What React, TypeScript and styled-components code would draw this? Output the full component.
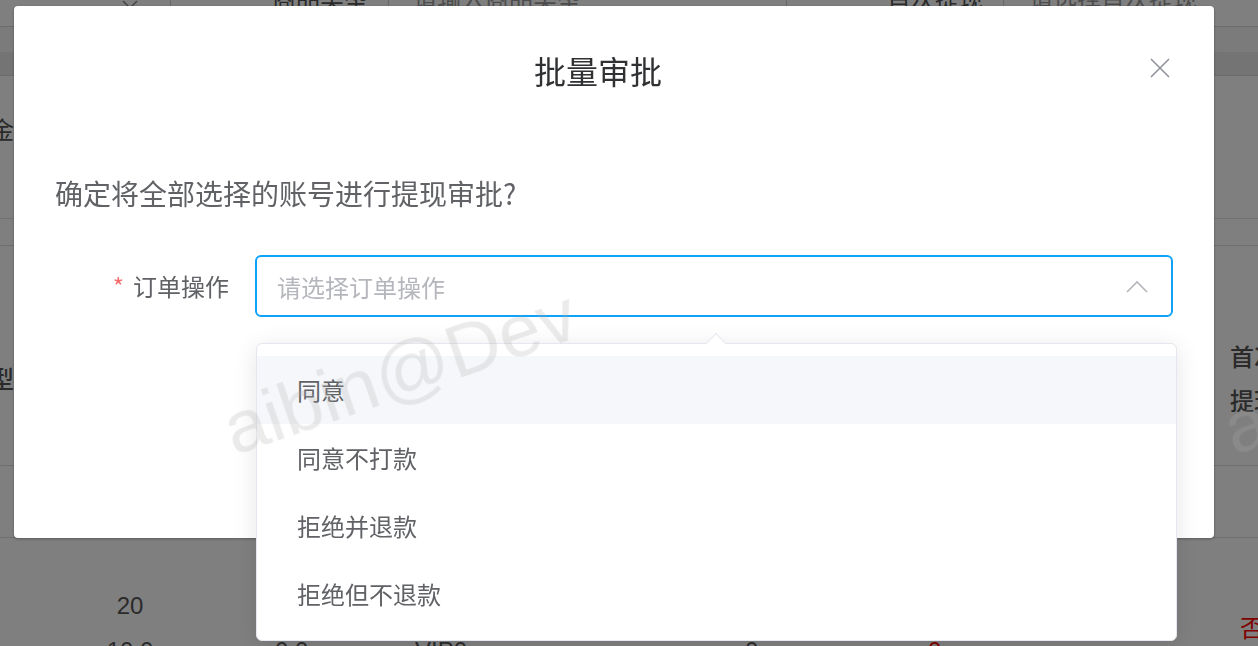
import React from "react";
import styled, { createGlobalStyle } from "styled-components";

const GlobalStyle = createGlobalStyle`
  html, body { margin: 0; padding: 0; height: 100%; overflow: hidden; }
  body {
    font-family: "Noto Sans CJK SC", "Noto Sans", "Liberation Sans", sans-serif;
    background: #ffffff;
  }
  * { box-sizing: border-box; }
`;

/* ---------- background page ---------- */
const Page = styled.div`
  height: 646px;
  overflow: hidden;
  background: #fff;
  color: #666;
  font-size: 24px;
`;

const FilterRow = styled.div`
  height: 27px;
  display: flex;
  align-items: flex-start;
  border-bottom: 1px solid #d8d8d8;
  overflow: hidden;
`;

const FilterSeg = styled.div<{ $w: number; $pl: number; $sep?: boolean; $muted?: boolean }>`
  width: ${(p) => p.$w}px;
  flex: none;
  height: 20px;
  display: flex;
  align-items: flex-end;
  padding-left: ${(p) => p.$pl}px;
  padding-bottom: 10px;
  border-right: ${(p) => (p.$sep ? "1px solid #cfcfcf" : "none")};
  color: ${(p) => (p.$muted ? "#9a9a9a" : "#555")};
  line-height: 24px;
  white-space: nowrap;
`;

const Band = styled.div<{ $h: number; $bg: string; $line?: boolean }>`
  height: ${(p) => p.$h}px;
  background: ${(p) => p.$bg};
  border-bottom: ${(p) => (p.$line ? "1px solid #d6d6d6" : "none")};
`;

const Summary = styled.div`
  height: 143px;
  padding-top: 38px;
  margin-left: -34px;
  line-height: 30px;
  color: #555;
  border-bottom: 1px solid #e2e2e2;
`;

const Toolbar = styled.div`
  height: 27px;
  border-bottom: 1px solid #dedede;
`;

const Spacer = styled.div`
  height: 44px;
`;

const TableHeader = styled.div`
  height: 176px;
  display: flex;
  align-items: center;
  justify-content: space-between;
  border-bottom: 1px solid #dcdcdc;
  color: #555;
  font-weight: 500;
`;

const HeaderCell = styled.div<{ $offset: number }>`
  line-height: 44px;
  margin: 0 ${(p) => p.$offset}px;
  white-space: nowrap;
`;

const EmptyRow = styled.div`
  height: 72px;
  border-bottom: 1px solid #dcdcdc;
`;

const DataRow = styled.div`
  height: 180px;
  display: grid;
  grid-template-columns: 260px 140px 330px 183px 312px 1fr;
  align-items: center;
  color: #555;
  font-family: "Liberation Sans", "Noto Sans CJK SC", sans-serif;
`;

const DataCell = styled.div<{ $center?: boolean; $red?: boolean }>`
  text-align: ${(p) => (p.$center ? "center" : "left")};
  padding-left: ${(p) => (p.$center ? 0 : 15)}px;
  line-height: 45px;
  color: ${(p) => (p.$red ? "#f00" : "#555")};
  white-space: pre;
`;

const CellLine = styled.div<{ $blank?: boolean }>`
  height: 45px;
  visibility: ${(p) => (p.$blank ? "hidden" : "visible")};
`;

/* ---------- dialog ---------- */
const Mask = styled.div`
  position: fixed;
  inset: 0;
  background: rgba(0, 0, 0, 0.5);
  overflow: hidden;
`;

const Dialog = styled.div`
  position: relative;
  margin: 6px 0 0 14px;
  width: 1200px;
  height: 532px;
  background: #fff;
  border-radius: 4px;
  box-shadow: 0 1px 3px rgba(0, 0, 0, 0.3);
`;

const DialogHeader = styled.div`
  position: relative;
  padding: 40px 32px 0 0;
`;

const Title = styled.div`
  font-size: 32px;
  line-height: 48px;
  text-align: center;
  color: #303133;
`;

const CloseButton = styled.button`
  position: absolute;
  top: 52px;
  right: 44px;
  width: 20px;
  height: 20px;
  padding: 0;
  border: none;
  background: transparent;
  display: flex;
  align-items: center;
  justify-content: center;
  cursor: pointer;
`;

const DialogBody = styled.div`
  padding: 79px 41px 0 41px;
`;

const ConfirmText = styled.div`
  font-size: 28px;
  line-height: 40px;
  color: #606266;
`;

const FormItem = styled.div`
  margin-top: 42px;
  display: flex;
  align-items: flex-start;
`;

const Label = styled.label`
  width: 200px;
  flex: none;
  padding-right: 26px;
  text-align: right;
  font-size: 24px;
  line-height: 62px;
  color: #606266;
`;

const Required = styled.span`
  color: #f56c6c;
  margin-right: 9px;
`;

const SelectWrap = styled.div`
  position: relative;
  flex: 1;
`;

const SelectBox = styled.div`
  height: 62px;
  border: 2px solid #0ea2f8;
  border-radius: 6px;
  display: flex;
  align-items: center;
  padding: 0 23px 0 20px;
`;

const Placeholder = styled.span`
  flex: 1;
  font-size: 24px;
  color: #b4b6bc;
`;

const Dropdown = styled.div`
  position: absolute;
  top: calc(100% + 26px);
  left: 1px;
  right: -4px;
  background: #fff;
  border: 1px solid #e4e7ed;
  border-radius: 6px;
  box-shadow: 0 4px 24px rgba(0, 0, 0, 0.1);
  padding: 12px 0;
  z-index: 5;
`;

const DropArrow = styled.div`
  position: absolute;
  top: -8px;
  left: 452px;
  width: 14px;
  height: 14px;
  background: #fff;
  border-top: 1px solid #e4e7ed;
  border-left: 1px solid #e4e7ed;
  transform: rotate(45deg);
`;

const Option = styled.div<{ $hover?: boolean }>`
  position: relative;
  height: 68px;
  line-height: 68px;
  padding-left: 40px;
  font-size: 24px;
  color: #606266;
  background: ${(p) => (p.$hover ? "#f5f7fa" : "transparent")};
`;

/* ---------- watermark ---------- */
const WatermarkLayer = styled.div`
  position: fixed;
  inset: 0;
  pointer-events: none;
  overflow: hidden;
  z-index: 20;
`;

const WatermarkText = styled.div<{ $left: number; $top: number }>`
  position: absolute;
  left: ${(p) => p.$left}px;
  top: ${(p) => p.$top}px;
  font-family: "Liberation Sans", Arial, sans-serif;
  font-size: 75px;
  line-height: 1;
  color: rgba(170, 170, 170, 0.24);
  white-space: nowrap;
  transform: rotate(-19deg);
  transform-origin: 0 100%;
`;

const options = ["同意", "同意不打款", "拒绝并退款", "拒绝但不退款"];

export default function App() {
  return (
    <>
      <GlobalStyle />
      <Page>
        <FilterRow>
          <FilterSeg $w={171} $pl={122} $sep>
            <svg width="16" height="10" viewBox="0 0 16 10">
              <path d="M1 1 L8 8 L15 1" fill="none" stroke="#888" strokeWidth="1.5" />
            </svg>
          </FilterSeg>
          <FilterSeg $w={218} $pl={101} $sep>商品类型</FilterSeg>
          <FilterSeg $w={398} $pl={24} $sep $muted>请输入商品类型</FilterSeg>
          <FilterSeg $w={217} $pl={100} $sep>首次提现</FilterSeg>
          <FilterSeg $w={254} $pl={25} $muted>请选择首次提现</FilterSeg>
        </FilterRow>
        <Band $h={25} $bg="#f6f6f6" />
        <Band $h={24} $bg="#e8e8e8" $line />
        <Summary>总金额</Summary>
        <Toolbar />
        <Spacer />
        <TableHeader>
          <HeaderCell $offset={-82}>商品类型</HeaderCell>
          <HeaderCell $offset={-20}>
            首次
            <br />
            提现
          </HeaderCell>
        </TableHeader>
        <EmptyRow />
        <DataRow>
          <DataCell $center>
            <CellLine>20</CellLine>
            <CellLine>10.0</CellLine>
          </DataCell>
          <DataCell>
            <CellLine $blank>-</CellLine>
            <CellLine>0.0</CellLine>
          </DataCell>
          <DataCell>
            <CellLine $blank>-</CellLine>
            <CellLine>VIP0</CellLine>
          </DataCell>
          <DataCell>
            <CellLine $blank>-</CellLine>
            <CellLine>0</CellLine>
          </DataCell>
          <DataCell $red>
            <CellLine $blank>-</CellLine>
            <CellLine>0</CellLine>
          </DataCell>
          <DataCell $red>否</DataCell>
        </DataRow>
      </Page>

      <Mask>
        <Dialog>
          <DialogHeader>
            <Title>批量审批</Title>
            <CloseButton aria-label="关闭">
              <svg width="20" height="20" viewBox="0 0 20 20">
                <path d="M1 1 L19 19 M19 1 L1 19" stroke="#909399" strokeWidth="1.6" fill="none" />
              </svg>
            </CloseButton>
          </DialogHeader>
          <DialogBody>
            <ConfirmText>确定将全部选择的账号进行提现审批?</ConfirmText>
            <FormItem>
              <Label>
                <Required>*</Required>订单操作
              </Label>
              <SelectWrap>
                <SelectBox>
                  <Placeholder>请选择订单操作</Placeholder>
                  <svg width="22" height="13" viewBox="0 0 22 13">
                    <path d="M1 12 L11 2 L21 12" fill="none" stroke="#b4b6bc" strokeWidth="1.6" />
                  </svg>
                </SelectBox>
                <Dropdown>
                  <DropArrow />
                  {options.map((o, i) => (
                    <Option key={o} $hover={i === 0}>
                      {o}
                    </Option>
                  ))}
                </Dropdown>
              </SelectWrap>
            </FormItem>
          </DialogBody>
        </Dialog>
      </Mask>

      <WatermarkLayer>
        <WatermarkText $left={238} $top={392}>aibin@Dev</WatermarkText>
        <WatermarkText $left={1238} $top={392}>aibin@Dev</WatermarkText>
      </WatermarkLayer>
    </>
  );
}
